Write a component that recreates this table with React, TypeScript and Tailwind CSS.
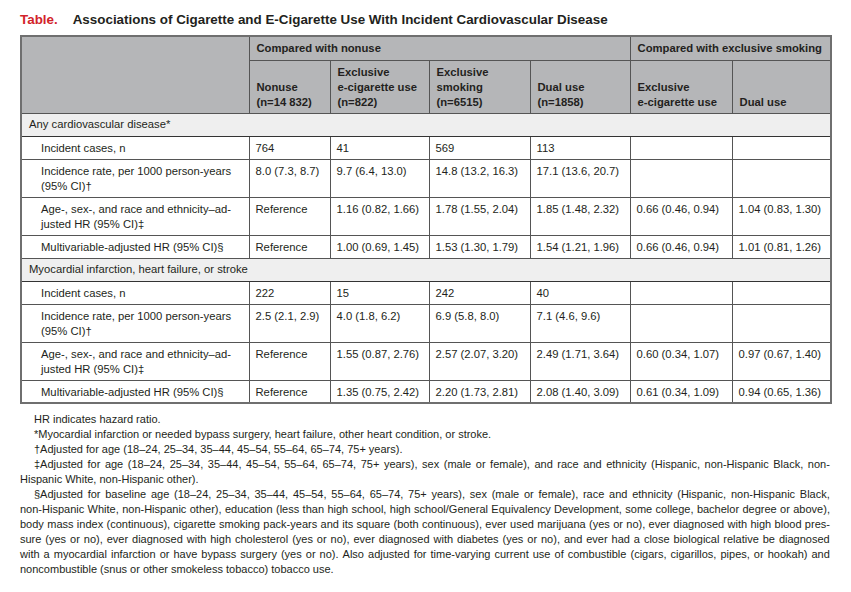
import React from 'react';

type Row = { label: React.ReactNode; cells: string[]; tall?: boolean };

const sections: { title: string; rows: Row[] }[] = [
  {
    title: 'Any cardiovascular disease*',
    rows: [
      { label: 'Incident cases, n', cells: ['764', '41', '569', '113', '', ''] },
      {
        label: <>Incidence rate, per 1000 person-years<br />(95% CI)†</>,
        cells: ['8.0 (7.3, 8.7)', '9.7 (6.4, 13.0)', '14.8 (13.2, 16.3)', '17.1 (13.6, 20.7)', '', ''],
        tall: true,
      },
      {
        label: <>Age-, sex-, and race and ethnicity–ad-<br />justed HR (95% CI)‡</>,
        cells: ['Reference', '1.16 (0.82, 1.66)', '1.78 (1.55, 2.04)', '1.85 (1.48, 2.32)', '0.66 (0.46, 0.94)', '1.04 (0.83, 1.30)'],
        tall: true,
      },
      {
        label: 'Multivariable-adjusted HR (95% CI)§',
        cells: ['Reference', '1.00 (0.69, 1.45)', '1.53 (1.30, 1.79)', '1.54 (1.21, 1.96)', '0.66 (0.46, 0.94)', '1.01 (0.81, 1.26)'],
      },
    ],
  },
  {
    title: 'Myocardial infarction, heart failure, or stroke',
    rows: [
      { label: 'Incident cases, n', cells: ['222', '15', '242', '40', '', ''] },
      {
        label: <>Incidence rate, per 1000 person-years<br />(95% CI)†</>,
        cells: ['2.5 (2.1, 2.9)', '4.0 (1.8, 6.2)', '6.9 (5.8, 8.0)', '7.1 (4.6, 9.6)', '', ''],
        tall: true,
      },
      {
        label: <>Age-, sex-, and race and ethnicity–ad-<br />justed HR (95% CI)‡</>,
        cells: ['Reference', '1.55 (0.87, 2.76)', '2.57 (2.07, 3.20)', '2.49 (1.71, 3.64)', '0.60 (0.34, 1.07)', '0.97 (0.67, 1.40)'],
        tall: true,
      },
      {
        label: 'Multivariable-adjusted HR (95% CI)§',
        cells: ['Reference', '1.35 (0.75, 2.42)', '2.20 (1.73, 2.81)', '2.08 (1.40, 3.09)', '0.61 (0.34, 1.09)', '0.94 (0.65, 1.36)'],
      },
    ],
  },
];

// footnote lines, broken as in the printed page; justify = stretch to full width
const notes: { text: string; indent?: boolean; justify?: boolean }[] = [
  { text: 'HR indicates hazard ratio.', indent: true },
  { text: '*Myocardial infarction or needed bypass surgery, heart failure, other heart condition, or stroke.', indent: true },
  { text: '†Adjusted for age (18–24, 25–34, 35–44, 45–54, 55–64, 65–74, 75+ years).', indent: true },
  { text: '‡Adjusted for age (18–24, 25–34, 35–44, 45–54, 55–64, 65–74, 75+ years), sex (male or female), and race and ethnicity (Hispanic, non-Hispanic Black, non-', indent: true, justify: true },
  { text: 'Hispanic White, non-Hispanic other).' },
  { text: '§Adjusted for baseline age (18–24, 25–34, 35–44, 45–54, 55–64, 65–74, 75+ years), sex (male or female), race and ethnicity (Hispanic, non-Hispanic Black,', indent: true, justify: true },
  { text: 'non-Hispanic White, non-Hispanic other), education (less than high school, high school/General Equivalency Development, some college, bachelor degree or above),', justify: true },
  { text: 'body mass index (continuous), cigarette smoking pack-years and its square (both continuous), ever used marijuana (yes or no), ever diagnosed with high blood pres-', justify: true },
  { text: 'sure (yes or no), ever diagnosed with high cholesterol (yes or no), ever diagnosed with diabetes (yes or no), and ever had a close biological relative be diagnosed', justify: true },
  { text: 'with a myocardial infarction or have bypass surgery (yes or no). Also adjusted for time-varying current use of combustible (cigars, cigarillos, pipes, or hookah) and', justify: true },
  { text: 'noncombustible (snus or other smokeless tobacco) tobacco use.' },
];

const cellBorder = 'border border-[#555]';
const headCell = `${cellBorder} text-left px-[7px] align-bottom pb-[3px]`;

const App: React.FC = () => {
  return (
    <div className="w-[851px] h-[592px] bg-white pl-[20px] pr-[21px] pt-[11px] text-[#231f20] font-['Liberation_Sans',Arial,sans-serif]">
      {/* Title */}
      <h1 className="text-[13.4px] font-bold leading-[18px] flex gap-[15px]">
        <span className="text-[#d2232a]">Table.</span>
        <span>Associations of Cigarette and E-Cigarette Use With Incident Cardiovascular Disease</span>
      </h1>

      {/* Table */}
      <table className="mt-[6px] w-[810px] border-collapse border-2 border-[#6f6f6f] text-[11.25px] leading-[15px] table-fixed">
        <colgroup>
          <col className="w-[228px]" />
          <col className="w-[81px]" />
          <col className="w-[99px]" />
          <col className="w-[101px]" />
          <col className="w-[100px]" />
          <col className="w-[102px]" />
          <col className="w-[99px]" />
        </colgroup>
        <thead className="bg-[#b5b6b8] font-bold">
          <tr className="h-[24px]">
            <th rowSpan={2} className={cellBorder}></th>
            <th colSpan={4} className={`${cellBorder} text-left px-[7px] align-middle`}>Compared with nonuse</th>
            <th colSpan={2} className={`${cellBorder} text-left px-[7px] align-middle`}>Compared with exclusive smoking</th>
          </tr>
          <tr className="h-[53px]">
            <th className={headCell}>Nonuse<br />(n=14 832)</th>
            <th className={headCell}>Exclusive<br />e-cigarette use<br />(n=822)</th>
            <th className={headCell}>Exclusive<br />smoking<br />(n=6515)</th>
            <th className={headCell}>Dual use<br />(n=1858)</th>
            <th className={headCell}>Exclusive<br />e-cigarette use</th>
            <th className={headCell}>Dual use</th>
          </tr>
        </thead>
        <tbody>
          {sections.map((s) => (
            <React.Fragment key={s.title}>
              <tr className="h-[23px] bg-[#efefef]">
                <td colSpan={7} className={`${cellBorder} border-b-[#333] px-[7px] align-middle`}>{s.title}</td>
              </tr>
              {s.rows.map((r, i) => (
                <tr key={i} className={r.tall ? 'h-[38px]' : 'h-[23px]'}>
                  <td className={`${cellBorder} pl-[19px] pr-[2px] align-top pt-[4px] whitespace-nowrap`}>{r.label}</td>
                  {r.cells.map((c, j) => (
                    <td key={j} className={`${cellBorder} px-[6px] align-top pt-[4px] whitespace-nowrap`}>{c}</td>
                  ))}
                </tr>
              ))}
            </React.Fragment>
          ))}
        </tbody>
      </table>

      {/* Footnotes */}
      <div className="mt-[8px] w-[810px] text-[11px] leading-[15px]">
        {notes.map((n, i) =>
          n.justify ? (
            <div key={i} className={`flex justify-between whitespace-nowrap ${n.indent ? 'pl-[14px]' : ''}`}>
              {n.text.split(' ').map((w, k) => (
                <span key={k}>{w}</span>
              ))}
            </div>
          ) : (
            <p key={i} className={`whitespace-nowrap ${n.indent ? 'pl-[14px]' : ''}`}>
              {n.text}
            </p>
          )
        )}
      </div>
    </div>
  );
};

export default App;
